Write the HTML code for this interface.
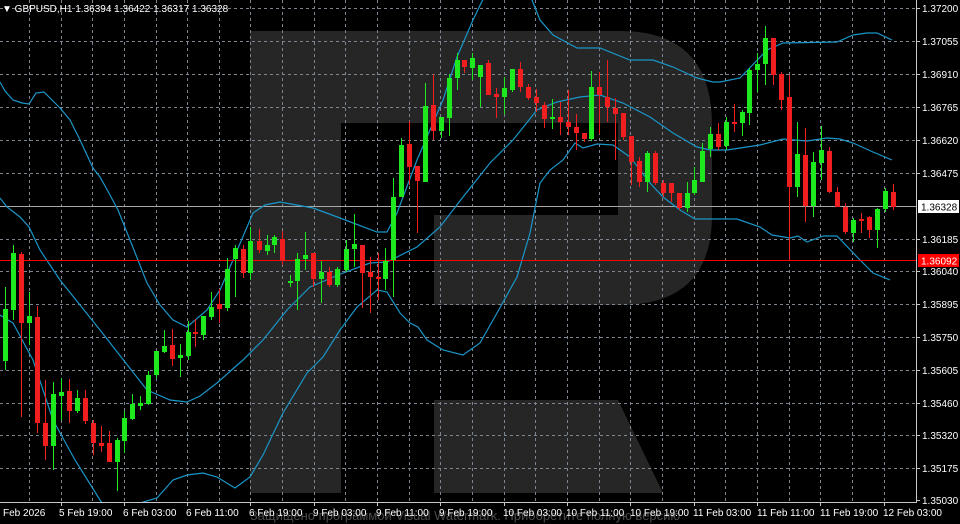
<!DOCTYPE html>
<html><head><meta charset="utf-8"><style>
html,body{margin:0;padding:0;background:#000;width:960px;height:524px;overflow:hidden}
svg{display:block}
text{font-family:"Liberation Sans","DejaVu Sans",sans-serif;font-size:10px;fill:#fff}
</style></head><body>
<svg width="960" height="524" viewBox="0 0 960 524" xmlns="http://www.w3.org/2000/svg">
<defs><clipPath id="c"><rect x="0" y="0" width="916" height="502"/></clipPath></defs>
<rect width="960" height="524" fill="#000"/>
<g clip-path="url(#c)">
<path fill="#262626" fill-rule="evenodd" d="M250 31H620Q712 31 712 125V215Q712 305 620 305H434V493H250Z M341 123H618V215H434V493H341Z"/>
<polygon fill="#262626" points="434,400 618,400 663,493 434,493"/>
<g stroke="#7d8590" stroke-width="1" stroke-dasharray="3 3" fill="none">
<path d="M29.5 0V502M61.5 0V502M92.5 0V502M124.5 0V502M156.5 0V502M187.5 0V502M219.5 0V502M250.5 0V502M282.5 0V502M314.5 0V502M345.5 0V502M377.5 0V502M409.5 0V502M440.5 0V502M472.5 0V502M504.5 0V502M535.5 0V502M567.5 0V502M599.5 0V502M630.5 0V502M662.5 0V502M694.5 0V502M725.5 0V502M757.5 0V502M789.5 0V502M820.5 0V502M852.5 0V502M884.5 0V502"/>
<path d="M0 8.5H916M0 41.5H916M0 74.5H916M0 107.5H916M0 140.5H916M0 173.5H916M0 239.5H916M0 271.5H916M0 304.5H916M0 337.5H916M0 370.5H916M0 403.5H916M0 435.5H916M0 468.5H916"/>
</g>
<line x1="0" y1="206.5" x2="916" y2="206.5" stroke="#a8a8a8" stroke-width="1"/>
<g fill="none" stroke="#1a96c8" stroke-width="1.2">
<polyline points="0,82 5,91 13,100 22,103 29,104 36,93 44,92 50,98 60,108 70,120 80,140 93,168 100,177 110,195 118,210 130,240 147,283 160,305 173,320 187,327 207,310 220,290 233,260 253,213 265,205 280,202 313,208 340,218 377,232 387,232 397,213 417,160 443,100 457,57 473,20 485,-5 530,-5 540,20 553,35 577,48 600,48 630,60 653,60 673,67 697,78 713,82 720,82 740,78 767,50 783,43 837,42 853,35 867,33 877,33 892,40"/>
<polyline points="0,198 7,207 20,217 29,227 40,250 60,280 80,305 100,330 125,362 147,390 170,400 187,402 200,396 217,383 235,367 243,360 263,340 287,310 310,287 343,273 370,263 387,262 397,257 417,247 440,227 463,197 490,163 513,140 537,110 557,102 580,97 600,95 623,103 650,117 673,133 697,147 710,150 727,150 760,145 783,139 807,141 827,138 840,139 853,143 873,152 892,160"/>
<polyline points="0,315 13,323 33,360 53,420 75,460 100,500 115,520 135,520 140,503 157,498 173,480 187,475 203,473 217,477 235,488 250,477 263,455 283,413 307,373 323,357 340,330 357,307 377,290 387,292 400,313 410,323 418,327 427,340 443,350 463,355 480,343 497,313 517,277 530,233 540,183 550,170 563,160 575,143 583,148 597,144 613,145 630,157 650,183 663,197 680,210 695,219 737,219 760,227 772,235 790,238 798,236 807,242 823,236 837,236 860,260 873,273 890,280"/>
</g>
<line x1="0" y1="260.5" x2="916" y2="260.5" stroke="#ff0000" stroke-width="1"/>
<path stroke="#1ee81e" stroke-width="1" fill="none" d="M5.5 287V370M13.5 245V320M29.5 292V345M53.5 382V470M61.5 378V420M77.5 390V413M117.5 438V491M124.5 411V453M132.5 394V420M140.5 396V410M148.5 371V405M156.5 351V378M164.5 330V353M180.5 344V377M188.5 321V360M203.5 316V340M211.5 292V320M227.5 258V311M235.5 245V297M250.5 227V280M267.5 235V255M274.5 235V253M290.5 275V287M297.5 253V310M305.5 232V270M321.5 261V303M337.5 267V287M346.5 240V272M354.5 214V267M385.5 248V290M393.5 178V297M401.5 138V197M425.5 83V182M441.5 117V138M449.5 74V136M457.5 53V90M472.5 53V80M480.5 65V107M504.5 77V114M512.5 69V92M552.5 99V129M591.5 71V141M647.5 151V192M687.5 182V212M694.5 167V195M702.5 143V182M710.5 127V157M726.5 117V150M742.5 110V136M749.5 68V125M757.5 53V92M765.5 26V85M797.5 122V197M813.5 152V217M821.5 126V180M853.5 218V242M877.5 208V248M885.5 188V212"/>
<g fill="#1ee81e">
<rect x="3" y="309" width="5" height="52"/><rect x="11" y="253" width="5" height="57"/><rect x="27" y="316" width="5" height="7"/><rect x="51" y="394" width="5" height="52"/><rect x="59" y="392" width="5" height="4"/><rect x="75" y="398" width="5" height="13"/><rect x="115" y="440" width="5" height="22"/><rect x="122" y="418" width="5" height="23"/><rect x="130" y="404" width="5" height="15"/><rect x="138" y="403" width="5" height="3"/><rect x="146" y="375" width="5" height="29"/><rect x="154" y="351" width="5" height="24"/><rect x="162" y="346" width="5" height="6"/><rect x="178" y="355" width="5" height="3"/><rect x="186" y="332" width="5" height="24"/><rect x="201" y="316" width="5" height="19"/><rect x="209" y="307" width="5" height="10"/><rect x="225" y="269" width="5" height="39"/><rect x="233" y="248" width="5" height="11"/><rect x="248" y="241" width="5" height="32"/><rect x="265" y="245" width="5" height="6"/><rect x="272" y="237" width="5" height="8"/><rect x="288" y="281" width="5" height="2"/><rect x="295" y="259" width="5" height="22"/><rect x="303" y="255" width="5" height="4"/><rect x="319" y="272" width="5" height="7"/><rect x="335" y="269" width="5" height="16"/><rect x="344" y="249" width="5" height="21"/><rect x="352" y="244" width="5" height="5"/><rect x="383" y="261" width="5" height="18"/><rect x="391" y="197" width="5" height="63"/><rect x="399" y="145" width="5" height="52"/><rect x="423" y="106" width="5" height="76"/><rect x="439" y="117" width="5" height="14"/><rect x="447" y="78" width="5" height="40"/><rect x="455" y="60" width="5" height="18"/><rect x="470" y="58" width="5" height="10"/><rect x="478" y="65" width="5" height="12"/><rect x="502" y="88" width="5" height="9"/><rect x="510" y="69" width="5" height="21"/><rect x="550" y="117" width="5" height="2"/><rect x="589" y="87" width="5" height="52"/><rect x="645" y="153" width="5" height="29"/><rect x="685" y="193" width="5" height="15"/><rect x="692" y="180" width="5" height="13"/><rect x="700" y="151" width="5" height="31"/><rect x="708" y="134" width="5" height="15"/><rect x="724" y="122" width="5" height="24"/><rect x="740" y="112" width="5" height="11"/><rect x="747" y="70" width="5" height="43"/><rect x="755" y="64" width="5" height="6"/><rect x="763" y="38" width="5" height="26"/><rect x="795" y="154" width="5" height="33"/><rect x="811" y="162" width="5" height="44"/><rect x="819" y="150" width="5" height="13"/><rect x="851" y="220" width="5" height="13"/><rect x="875" y="209" width="5" height="21"/><rect x="883" y="191" width="5" height="18"/>
</g>
<path stroke="#f01e1e" stroke-width="1" fill="none" d="M21.5 252V417M37.5 306V433M45.5 380V460M69.5 379V423M85.5 390V424M93.5 420V455M101.5 426V452M109.5 431V462M172.5 329V366M195.5 319V347M219.5 289V323M243.5 245V278M259.5 229V253M282.5 231V265M313.5 253V287M329.5 267V287M362.5 245V308M370.5 257V313M378.5 253V300M409.5 121V185M417.5 166V233M433.5 74V140M464.5 60V73M488.5 60V95M496.5 88V118M520.5 62V92M528.5 84V100M536.5 89V112M544.5 102V128M560.5 102V135M568.5 90V135M576.5 114V150M584.5 133V142M599.5 72V134M607.5 60V122M615.5 98V160M623.5 113V140M631.5 136V185M639.5 157V187M655.5 151V185M663.5 180V197M671.5 183V202M679.5 193V210M718.5 123V150M734.5 104V132M773.5 38V85M781.5 72V110M789.5 75V260M805.5 128V222M829.5 147V193M837.5 187V207M845.5 203V234M861.5 213V233M869.5 216V238M893.5 184V210"/>
<g fill="#f01e1e">
<rect x="19" y="254" width="5" height="69"/><rect x="35" y="317" width="5" height="106"/><rect x="43" y="423" width="5" height="23"/><rect x="67" y="391" width="5" height="20"/><rect x="83" y="398" width="5" height="23"/><rect x="91" y="423" width="5" height="20"/><rect x="99" y="443" width="5" height="3"/><rect x="107" y="443" width="5" height="19"/><rect x="170" y="345" width="5" height="14"/><rect x="193" y="332" width="5" height="2"/><rect x="217" y="304" width="5" height="5"/><rect x="241" y="249" width="5" height="24"/><rect x="257" y="241" width="5" height="9"/><rect x="280" y="239" width="5" height="22"/><rect x="311" y="253" width="5" height="26"/><rect x="327" y="272" width="5" height="13"/><rect x="360" y="245" width="5" height="28"/><rect x="368" y="272" width="5" height="5"/><rect x="376" y="277" width="5" height="2"/><rect x="407" y="144" width="5" height="23"/><rect x="415" y="166" width="5" height="15"/><rect x="431" y="105" width="5" height="26"/><rect x="462" y="60" width="5" height="7"/><rect x="486" y="63" width="5" height="32"/><rect x="494" y="94" width="5" height="3"/><rect x="518" y="69" width="5" height="18"/><rect x="526" y="87" width="5" height="11"/><rect x="534" y="97" width="5" height="6"/><rect x="542" y="105" width="5" height="14"/><rect x="558" y="117" width="5" height="5"/><rect x="566" y="122" width="5" height="5"/><rect x="574" y="127" width="5" height="6"/><rect x="582" y="133" width="5" height="6"/><rect x="597" y="87" width="5" height="8"/><rect x="605" y="97" width="5" height="10"/><rect x="613" y="108" width="5" height="6"/><rect x="621" y="113" width="5" height="24"/><rect x="629" y="136" width="5" height="26"/><rect x="637" y="161" width="5" height="21"/><rect x="653" y="153" width="5" height="30"/><rect x="661" y="183" width="5" height="10"/><rect x="669" y="183" width="5" height="10"/><rect x="677" y="193" width="5" height="15"/><rect x="716" y="134" width="5" height="13"/><rect x="732" y="122" width="5" height="2"/><rect x="771" y="38" width="5" height="37"/><rect x="779" y="74" width="5" height="26"/><rect x="787" y="97" width="5" height="90"/><rect x="803" y="155" width="5" height="51"/><rect x="827" y="151" width="5" height="41"/><rect x="835" y="192" width="5" height="15"/><rect x="843" y="207" width="5" height="25"/><rect x="859" y="219" width="5" height="2"/><rect x="867" y="217" width="5" height="13"/><rect x="891" y="192" width="5" height="15"/>
</g>
</g>
<line x1="916.5" y1="0" x2="916.5" y2="503" stroke="#c8c8c8"/>
<line x1="0" y1="502.5" x2="917" y2="502.5" stroke="#c8c8c8"/>
<text x="2" y="12">▼ GBPUSD,H1  1.36394 1.36422 1.36317 1.36328</text>
<g stroke="#c8c8c8"><path d="M916 8.5h4M916 41.5h4M916 74.5h4M916 107.5h4M916 140.5h4M916 173.5h4M916 239.5h4M916 271.5h4M916 304.5h4M916 337.5h4M916 370.5h4M916 403.5h4M916 435.5h4M916 468.5h4M916 500.5h4"/></g>
<g>
<text x="922" y="12">1.37200</text><text x="922" y="45">1.37055</text><text x="922" y="78">1.36910</text><text x="922" y="111">1.36765</text><text x="922" y="144">1.36620</text><text x="922" y="177">1.36475</text><text x="922" y="243">1.36185</text><text x="922" y="275">1.36040</text><text x="922" y="308">1.35895</text><text x="922" y="341">1.35750</text><text x="922" y="374">1.35605</text><text x="922" y="407">1.35460</text><text x="922" y="439">1.35320</text><text x="922" y="472">1.35175</text><text x="922" y="504">1.35030</text>
</g>
<rect x="918" y="200" width="41" height="13" fill="#fff"/>
<text x="921" y="210.5" style="fill:#000">1.36328</text>
<rect x="918" y="254" width="41" height="13" fill="#ff0000"/>
<text x="921" y="264.5">1.36092</text>
<g stroke="#c8c8c8"><path d="M61.5 502v4M124.5 502v4M187.5 502v4M250.5 502v4M314.5 502v4M377.5 502v4M440.5 502v4M504.5 502v4M567.5 502v4M630.5 502v4M694.5 502v4M757.5 502v4M820.5 502v4M884.5 502v4"/></g>
<text x="465" y="520" style="fill:#4a4a4a;font-size:13px" text-anchor="middle">Защищено программой Visual Watermark. Приобретите полную версию</text>
<g>
<text x="3" y="516">Feb 2026</text><text x="59" y="516">5 Feb 19:00</text><text x="123" y="516">6 Feb 03:00</text><text x="186" y="516">6 Feb 11:00</text><text x="249" y="516">6 Feb 19:00</text><text x="313" y="516">9 Feb 03:00</text><text x="376" y="516">9 Feb 11:00</text><text x="439" y="516">9 Feb 19:00</text><text x="503" y="516">10 Feb 03:00</text><text x="566" y="516">10 Feb 11:00</text><text x="630" y="516">10 Feb 19:00</text><text x="693" y="516">11 Feb 03:00</text><text x="757" y="516">11 Feb 11:00</text><text x="820" y="516">11 Feb 19:00</text><text x="883" y="516">12 Feb 03:00</text>
</g>
</svg>
</body></html>
